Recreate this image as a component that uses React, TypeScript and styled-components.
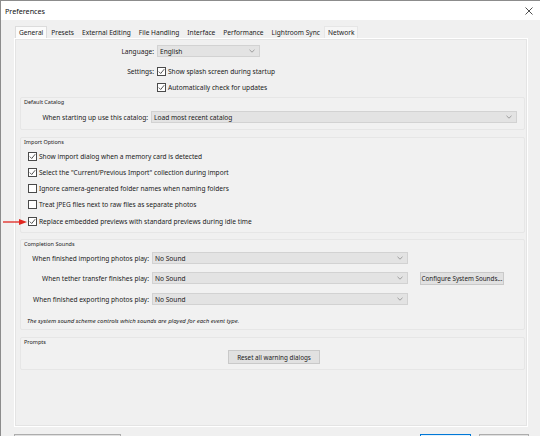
import React from "react";
import styled, { createGlobalStyle } from "styled-components";

const Global = createGlobalStyle`
  html, body { margin: 0; padding: 0; background: #f0f0f0; }
  * { box-sizing: border-box; }
  body { font-family: "Noto Sans", "DejaVu Sans", sans-serif; color: #1a1a1a; }
`;

const Win = styled.div`
  position: relative;
  width: 540px;
  height: 436px;
  overflow: hidden;
  background: #f0f0f0;
  border-top: 1px solid #8c8c8c;
  border-left: 1px solid #8c8c8c;
  display: flex;
  flex-direction: column;
`;

const TitleBar = styled.div`
  height: 19px;
  flex: none;
  background: #fff;
  display: flex;
  align-items: center;
  justify-content: space-between;
  padding: 0 7px 0 4px;
  font-size: 7.2px;
  color: #111;
`;

const Body = styled.div`
  flex: 1;
  display: flex;
  flex-direction: column;
  padding: 6px 12px 0 13px;
`;

const TabRow = styled.div`
  display: flex;
  height: 12px;
  padding-left: 1px;
  align-items: stretch;
`;

const Tab = styled.div<{ $active?: boolean; $hover?: boolean }>`
  font-size: 6.6px;
  line-height: 11px;
  padding: 0 3px;
  border: 1px solid ${(p) => (p.$active ? "#dcdcdc" : p.$hover ? "#e6e6e6" : "transparent")};
  border-bottom: none;
  background: ${(p) => (p.$active ? "#fbfbfb" : p.$hover ? "#f6f6f6" : "transparent")};
  color: #1a1a1a;
  white-space: nowrap;
`;

const Panel = styled.div`
  height: 389px;
  border: 1px solid #fff;
  box-shadow: inset 0 0 0 1px #e4e4e4;
  display: flex;
  flex-direction: column;
  padding: 5px 2px 0 5px;
`;

const Row = styled.div<{ $mt?: number }>`
  display: flex;
  align-items: center;
  height: 12px;
  margin-top: ${(p) => p.$mt ?? 0}px;
  font-size: 6.6px;
  white-space: nowrap;
`;

const Label = styled.div<{ $w: number }>`
  width: ${(p) => p.$w}px;
  flex: none;
  text-align: right;
  padding-right: 3px;
`;

const Select = styled.div<{ $w: number }>`
  width: ${(p) => p.$w}px;
  height: 12px;
  flex: none;
  background: #e3e3e3;
  border: 1px solid #d2d2d2;
  display: flex;
  align-items: center;
  justify-content: space-between;
  padding: 0 4px 0 2px;
  font-size: 6.6px;
`;

const Box = styled.span`
  width: 9px;
  height: 9px;
  flex: none;
  border: 1px solid #4a4a4a;
  background: #fff;
  display: inline-flex;
  align-items: center;
  justify-content: center;
  margin-right: 2px;
`;

const Group = styled.div<{ $mt: number; $pb: number }>`
  margin-top: ${(p) => p.$mt}px;
  border: 1px solid #e6e6e6;
  border-radius: 2px;
  background: #f1f1f1;
  padding: 0 0 ${(p) => p.$pb}px 3px;
  display: flex;
  flex-direction: column;
`;

const GroupTitle = styled.div`
  font-size: 5.5px;
  line-height: 8px;
  color: #222;
`;

const Indent = styled.div<{ $pl: number }>`
  padding-left: ${(p) => p.$pl}px;
  display: flex;
  flex-direction: column;
`;

const Btn = styled.div<{ $w: number; $h?: number; $ml?: number }>`
  width: ${(p) => p.$w}px;
  height: ${(p) => p.$h ?? 13}px;
  margin-left: ${(p) => p.$ml ?? 0}px;
  flex: none;
  background: #e1e1e1;
  border: 1px solid #c9c9c9;
  font-size: 6.3px;
  display: flex;
  align-items: center;
  justify-content: center;
  white-space: nowrap;
`;

const Note = styled.div`
  font-size: 6px;
  font-style: italic;
  line-height: 10px;
  margin-top: 11px;
  padding-left: 3px;
`;

const Center = styled.div`
  display: flex;
  justify-content: center;
  margin-top: 4px;
`;

const Footer = styled.div`
  display: flex;
  margin-top: 7px;
`;

const FootBtn = styled.div<{ $w: number; $ml: number; $primary?: boolean }>`
  width: ${(p) => p.$w}px;
  height: 18px;
  margin-left: ${(p) => p.$ml}px;
  background: ${(p) => (p.$primary ? "#e5f1fb" : "#e1e1e1")};
  border: 1px solid ${(p) => (p.$primary ? "#0078d7" : "#adadad")};
  flex: none;
`;

const Arrow = styled.svg`
  position: absolute;
  left: 1px;
  top: 216px;
`;

const Chevron = () => (
  <svg width="6" height="4" viewBox="0 0 6 4">
    <path d="M0.5 0.8 L3 3.2 L5.5 0.8" fill="none" stroke="#8a8a8a" strokeWidth="0.8" />
  </svg>
);

const Check = ({ on }: { on?: boolean }) => (
  <Box>
    {on && (
      <svg width="7" height="7" viewBox="0 0 7 7">
        <path d="M0.8 3.6 L2.7 5.5 L6.2 1.2" fill="none" stroke="#444" strokeWidth="0.9" />
      </svg>
    )}
  </Box>
);

const tabs = [
  "General",
  "Presets",
  "External Editing",
  "File Handling",
  "Interface",
  "Performance",
  "Lightroom Sync",
  "Network",
];

const imports: [boolean, string][] = [
  [true, "Show import dialog when a memory card is detected"],
  [true, 'Select the "Current/Previous Import" collection during import'],
  [false, "Ignore camera-generated folder names when naming folders"],
  [false, "Treat JPEG files next to raw files as separate photos"],
  [true, "Replace embedded previews with standard previews during idle time"],
];

export default function App() {
  return (
    <>
      <Global />
      <Win>
        <TitleBar>
          <span>Preferences</span>
          <svg width="8" height="8" viewBox="0 0 8 8">
            <path d="M0.5 0.5 L7.5 7.5 M7.5 0.5 L0.5 7.5" stroke="#222" strokeWidth="0.8" />
          </svg>
        </TitleBar>
        <Body>
          <TabRow>
            {tabs.map((t, i) => (
              <Tab key={t} $active={i === 0} $hover={i === tabs.length - 1}>
                {t}
              </Tab>
            ))}
          </TabRow>
          <Panel>
            <Row $mt={1}>
              <Label $w={137}>Language:</Label>
              <Select $w={103}>
                English
                <Chevron />
              </Select>
            </Row>
            <Row $mt={8}>
              <Label $w={137}>Settings:</Label>
              <Check on />
              Show splash screen during startup
            </Row>
            <Row $mt={4}>
              <Label $w={137} />
              <Check on />
              Automatically check for updates
            </Row>

            <Group $mt={4} $pb={6}>
              <GroupTitle>Default Catalog</GroupTitle>
              <Row $mt={5}>
                <Label $w={127}>When starting up use this catalog:</Label>
                <Select $w={366}>
                  Load most recent catalog
                  <Chevron />
                </Select>
              </Row>
            </Group>

            <Group $mt={7} $pb={5}>
              <GroupTitle>Import Options</GroupTitle>
              <Indent $pl={4}>
                {imports.map(([on, t], i) => (
                  <Row key={t} $mt={i === 0 ? 4 : i === 4 ? 5 : 4}>
                    <Check on={on} />
                    {t}
                  </Row>
                ))}
              </Indent>
            </Group>

            <Group $mt={6} $pb={3}>
              <GroupTitle>Completion Sounds</GroupTitle>
              <Row $mt={4}>
                <Label $w={128}>When finished importing photos play:</Label>
                <Select $w={256}>
                  No Sound
                  <Chevron />
                </Select>
              </Row>
              <Row $mt={8}>
                <Label $w={128}>When tether transfer finishes play:</Label>
                <Select $w={256}>
                  No Sound
                  <Chevron />
                </Select>
                <Btn $w={84} $ml={12}>
                  Configure System Sounds...
                </Btn>
              </Row>
              <Row $mt={9}>
                <Label $w={128}>When finished exporting photos play:</Label>
                <Select $w={256}>
                  No Sound
                  <Chevron />
                </Select>
              </Row>
              <Note>The system sound scheme controls which sounds are played for each event type.</Note>
            </Group>

            <Group $mt={7} $pb={5}>
              <GroupTitle>Prompts</GroupTitle>
              <Center>
                <Btn $w={92} $h={14}>
                  Reset all warning dialogs
                </Btn>
              </Center>
            </Group>
          </Panel>
          <Footer>
            <FootBtn $w={107} $ml={0} />
            <FootBtn $w={51} $ml={299} $primary />
            <FootBtn $w={50} $ml={8} />
          </Footer>
        </Body>
        <Arrow width="26" height="10" viewBox="0 0 26 10">
          <path d="M1 5 L19 5" stroke="#e0261f" strokeWidth="1.3" />
          <path d="M17 2 L25 5 L17 8 Z" fill="#e0261f" />
        </Arrow>
      </Win>
    </>
  );
}
